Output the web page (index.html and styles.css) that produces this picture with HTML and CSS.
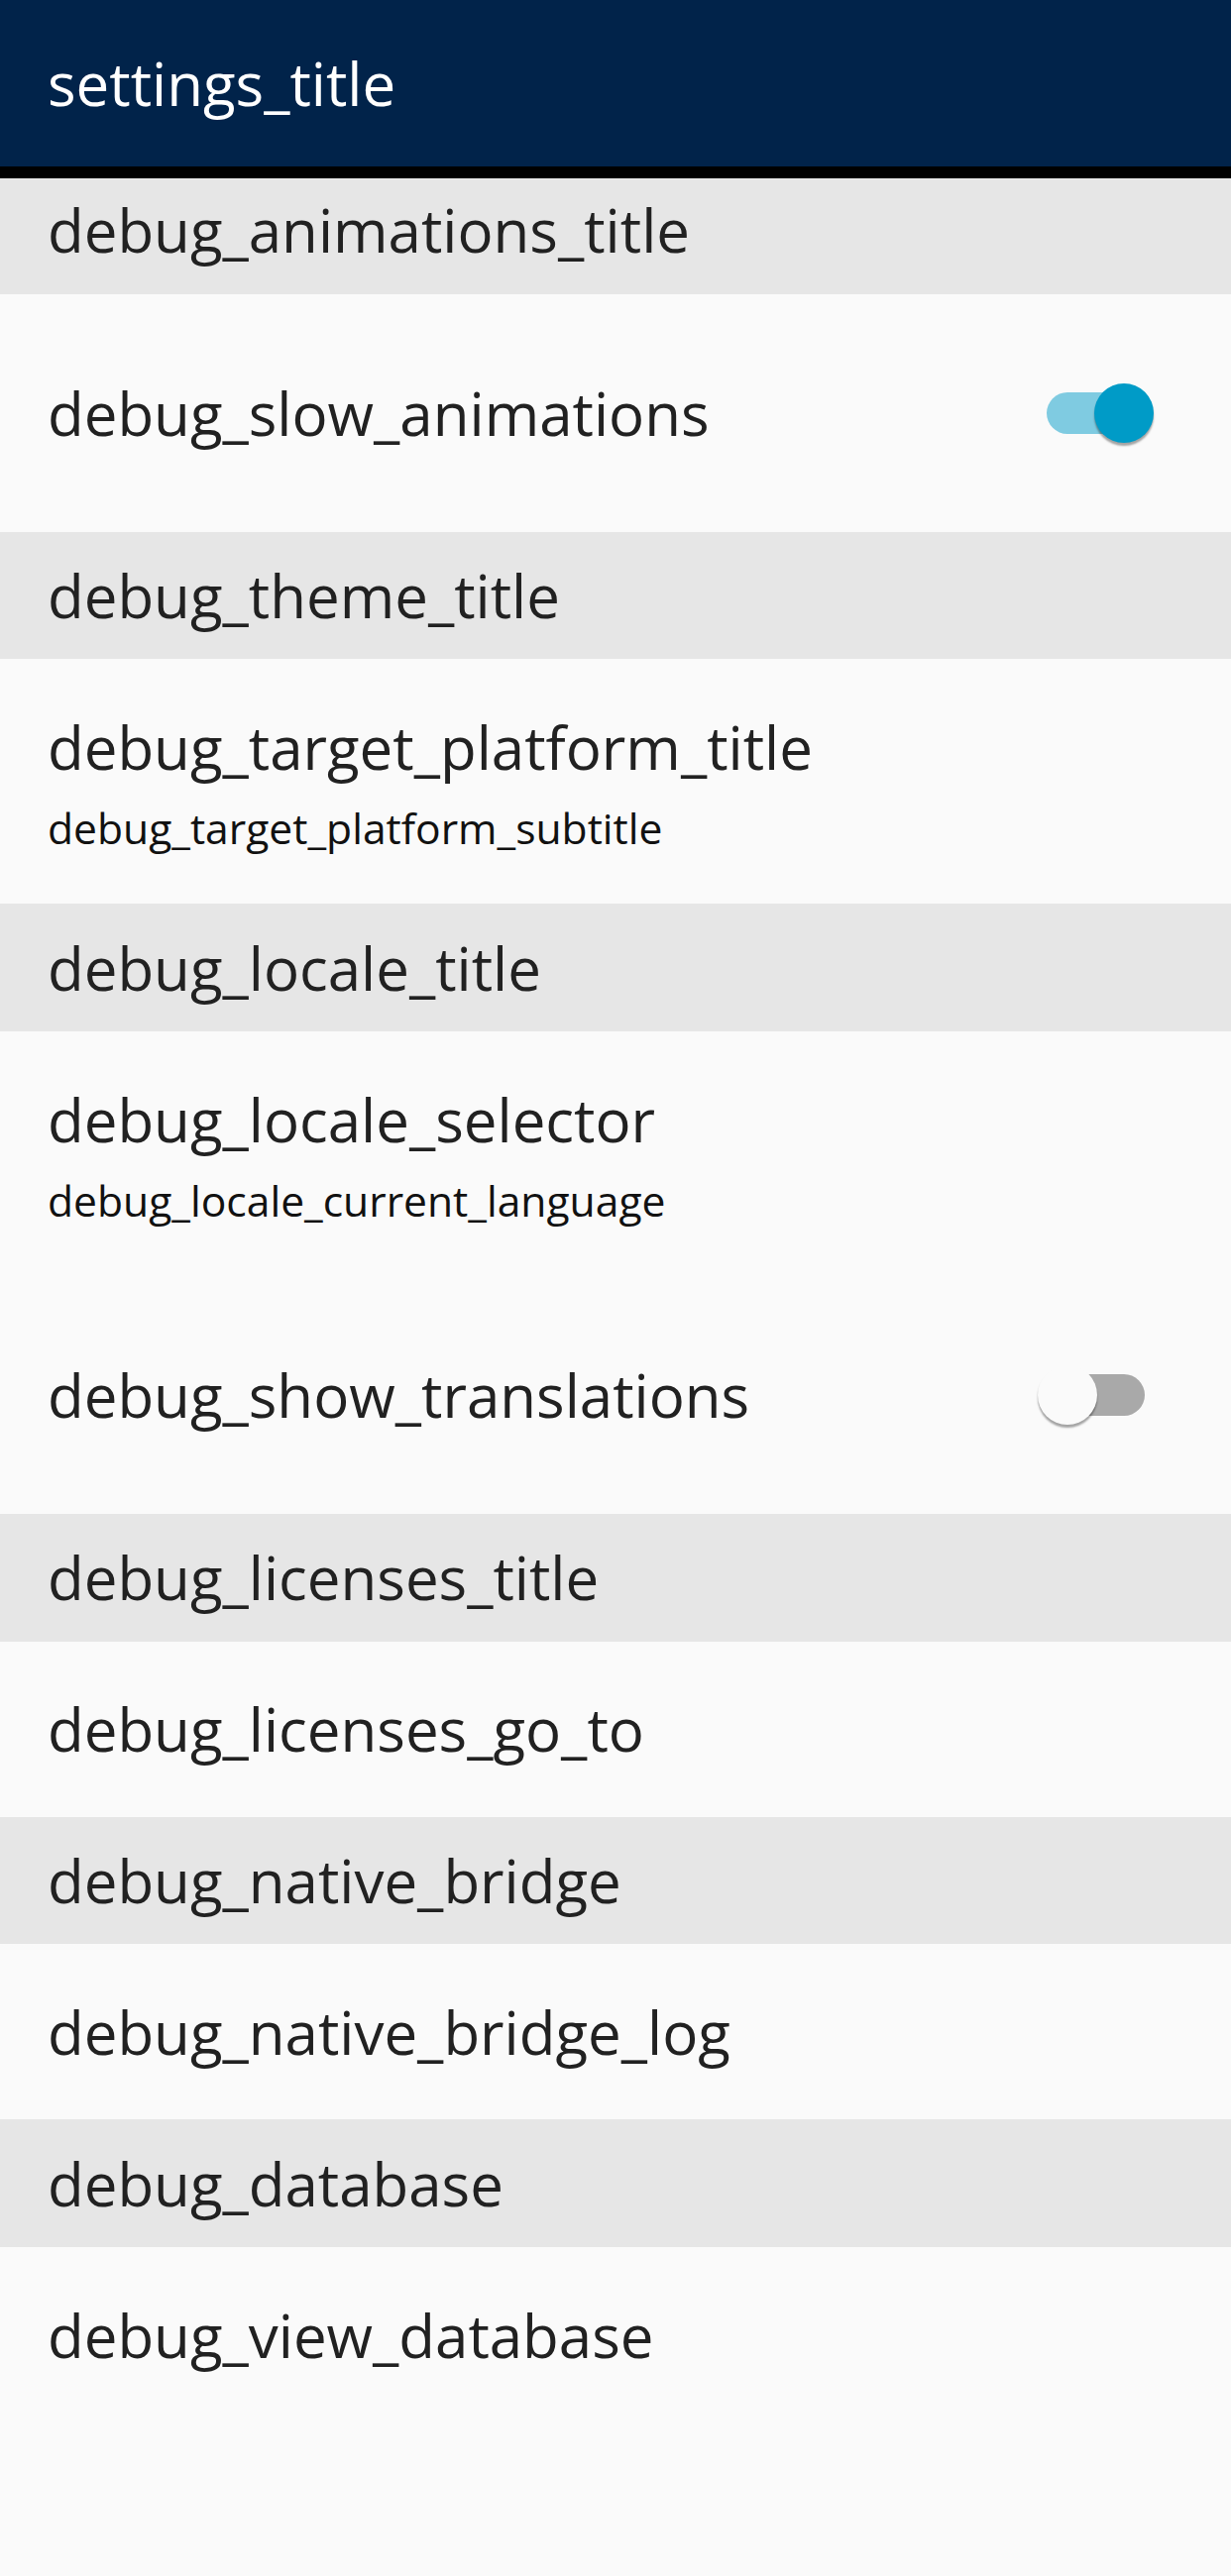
FILE: index.html
```html
<!DOCTYPE html>
<html lang="en">
<head>
<meta charset="utf-8">
<title>settings_title</title>
<link rel="stylesheet" href="styles.css">
</head>
<body>
<div class="app">
  <header class="appbar"><span class="appbar-title">settings_title</span></header>
  <div class="shadow"></div>
  <main class="list">
    <div class="section section-first"><span>debug_animations_title</span></div>
    <div class="tile tile-switch">
      <span class="tile-title">debug_slow_animations</span>
      <div class="switch switch-on"><div class="track"></div><div class="thumb"></div></div>
    </div>

    <div class="section"><span>debug_theme_title</span></div>
    <div class="tile tile-two">
      <span class="tile-title">debug_target_platform_title</span>
      <span class="tile-sub">debug_target_platform_subtitle</span>
    </div>

    <div class="section"><span>debug_locale_title</span></div>
    <div class="tile tile-two">
      <span class="tile-title">debug_locale_selector</span>
      <span class="tile-sub">debug_locale_current_language</span>
    </div>
    <div class="tile tile-switch">
      <span class="tile-title">debug_show_translations</span>
      <div class="switch switch-off"><div class="track"></div><div class="thumb"></div></div>
    </div>

    <div class="section"><span>debug_licenses_title</span></div>
    <div class="tile tile-one"><span class="tile-title">debug_licenses_go_to</span></div>

    <div class="section"><span>debug_native_bridge</span></div>
    <div class="tile tile-one"><span class="tile-title">debug_native_bridge_log</span></div>

    <div class="section"><span>debug_database</span></div>
    <div class="tile tile-one"><span class="tile-title">debug_view_database</span></div>
  </main>
</div>
</body>
</html>
```
FILE: styles.css
```css
html, body {
  margin: 0;
  padding: 0;
  background: #fafafa;
}
body {
  width: 1242px;
  height: 2600px;
  overflow: hidden;
  font-family: "Open Sans", "DejaVu Sans", sans-serif;
  color: #212121;
}
.app {
  display: flex;
  flex-direction: column;
  min-height: 2600px;
  background: #fafafa;
}
.appbar {
  height: 168px;
  flex: none;
  background: #01234a;
  display: flex;
  align-items: center;
  padding-left: 48px;
}
.appbar-title {
  color: #ffffff;
  font-size: 60px;
  line-height: 82px;
}
.shadow {
  height: 12px;
  flex: none;
  background: #000;
}
.list {
  display: flex;
  flex-direction: column;
}
.section {
  height: 128.7px;
  flex: none;
  box-sizing: border-box;
  background: #e6e6e6;
  display: flex;
  align-items: center;
  padding-left: 48px;
  font-size: 60px;
  line-height: 82px;
  color: #212121;
}
.section-first {
  height: 116.7px;
  padding-bottom: 12px;
}
.tile {
  display: flex;
  flex: none;
  padding-left: 48px;
  background: #fafafa;
}
.tile-title {
  font-size: 60px;
  line-height: 82px;
  color: #212121;
}
.tile-sub {
  font-size: 42.6px;
  line-height: 58px;
  color: #111111;
  margin-top: 11px;
}
.tile-switch {
  height: 240px;
  align-items: center;
  justify-content: space-between;
  padding-right: 87px;
}
.tile-two {
  flex-direction: column;
  padding-top: 48px;
  padding-bottom: 48px;
}
.tile-one {
  height: 177px;
  align-items: center;
}
.switch {
  position: relative;
  width: 99px;
  height: 60px;
}
.track {
  position: absolute;
  left: 0;
  top: 9px;
  width: 99px;
  height: 42px;
  border-radius: 21px;
}
.thumb {
  position: absolute;
  top: 0;
  width: 60px;
  height: 60px;
  border-radius: 50%;
  box-shadow: 0 3px 2px rgba(0, 0, 0, 0.35);
}
.switch-on .track { background: #7fcbe1; }
.switch-on .thumb { background: #009bc7; left: 48px; }
.switch-off .track { background: #a9a9a9; }
.switch-off .thumb { background: #fafafa; left: -9px; }
```
